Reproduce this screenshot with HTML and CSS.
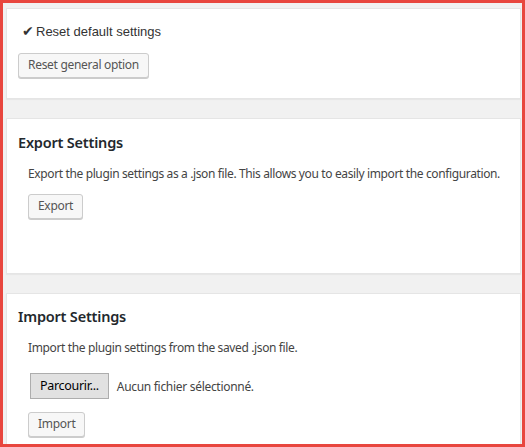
FILE: index.html
```html
<!DOCTYPE html>
<html>
<head>
<meta charset="utf-8">
<link rel="stylesheet" href="styles.css">
</head>
<body>
<div class="frame">
  <div class="wrap">
    <section class="card card-reset">
      <p class="reset-title"><span class="check">✔</span>Reset default settings</p>
      <button class="btn">Reset general option</button>
    </section>
    <section class="card card-export">
      <h2>Export Settings</h2>
      <div class="inside">
        <p class="desc">Export the plugin settings as a .json file. This allows you to easily import the configuration.</p>
        <button class="btn">Export</button>
      </div>
    </section>
    <section class="card card-import">
      <h2>Import Settings</h2>
      <div class="inside">
        <p class="desc">Import the plugin settings from the saved .json file.</p>
        <div class="file-row">
          <span class="file-btn">Parcourir...</span>
          <span class="file-name">Aucun fichier sélectionné.</span>
        </div>
        <button class="btn">Import</button>
      </div>
    </section>
  </div>
</div>
</body>
</html>
```
FILE: styles.css
```css
html, body {
  margin: 0;
  padding: 0;
  height: 100%;
}
body {
  font-family: "Noto Sans", "Open Sans", sans-serif;
  color: #444;
  overflow: hidden;
}
.frame {
  box-sizing: border-box;
  width: 525px;
  height: 447px;
  border: 3px solid #e8463e;
  background: #f1f1f1;
  overflow: hidden;
}
.wrap {
  display: flex;
  flex-direction: column;
  gap: 19px;
  padding: 5px 1px 0 3px;
}
.card {
  background: #fff;
  border: 1px solid #e5e5e5;
  box-shadow: 0 1px 1px rgba(0,0,0,.04);
  box-sizing: border-box;
}
.card-reset {
  height: 91px;
  padding: 13px 11px 0 11px;
}
.reset-title {
  margin: 0 0 11px 4px;
  font-family: "Liberation Sans", Arial, sans-serif;
  font-size: 13px;
  color: #333;
  line-height: 18px;
}
.check {
  margin-right: 2px;
  font-size: 14px;
}
.btn {
  font-family: "Noto Sans", "Open Sans", sans-serif;
  font-size: 12px;
  letter-spacing: -0.3px;
  color: #555;
  background: #f7f7f7;
  border: 1px solid #ccc;
  border-radius: 3px;
  box-shadow: 0 1px 0 #ccc;
  height: 25px;
  padding: 0 9px 1px;
  line-height: 22px;
  cursor: pointer;
}
.card h2 {
  margin: 0;
  font-size: 14.5px;
  font-weight: 600;
  letter-spacing: -0.2px;
  color: #23282d;
  line-height: 20px;
}
.card-export {
  height: 156px;
  padding: 13px 11px 0;
}
.card-import {
  height: 160px;
  padding: 12px 11px 0;
}
.inside {
  padding: 0 10px;
}
.desc {
  margin: 13px 0 10px;
  font-size: 12px;
  letter-spacing: -0.37px;
  line-height: 18px;
  color: #444;
  white-space: nowrap;
}
.file-row {
  display: flex;
  align-items: center;
  gap: 8px;
  margin: 16px 0 12px 2px;
}
.file-btn {
  display: inline-block;
  box-sizing: border-box;
  height: 26px;
  padding: 0 9px;
  line-height: 24px;
  font-size: 12.5px;
  letter-spacing: -0.3px;
  color: #000;
  background: #e1e1e1;
  border: 1px solid #adadad;
}
.file-name {
  font-size: 12px;
  letter-spacing: -0.3px;
  color: #444;
}
```
